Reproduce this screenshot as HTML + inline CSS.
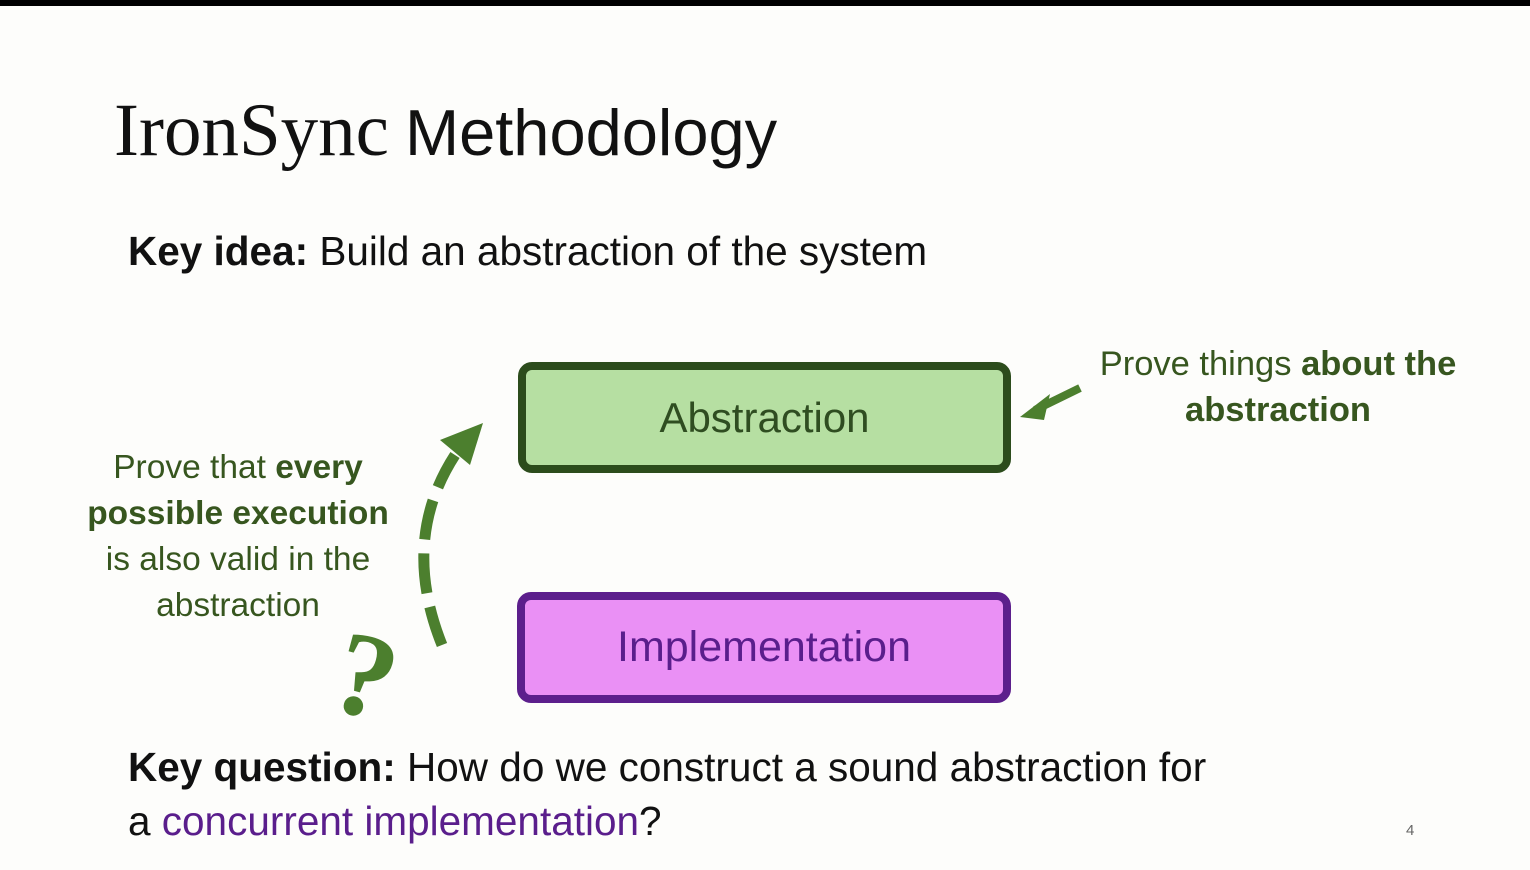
<!DOCTYPE html>
<html><head><style>
body{margin:0;width:1530px;height:870px;background:#fdfdfb;position:relative;overflow:hidden;font-family:"Liberation Sans",sans-serif}
.bar{position:absolute;left:0;top:0;width:1530px;height:6px;background:#000}
.t{position:absolute;white-space:nowrap}
.box{position:absolute;box-sizing:border-box;border-radius:14px;display:flex;align-items:center;justify-content:center;font-size:42px}
</style></head><body>
<div class="bar"></div>
<div class="t" style="left:114px;top:88px;color:#111"><span style="font-family:'Liberation Serif',serif;font-size:75px">IronSync</span><span style="font-size:65px;margin-left:16px">Methodology</span></div>
<div class="t" style="left:128px;top:228px;font-size:40.5px;color:#111"><b>Key idea:</b> Build an abstraction of the system</div>
<div class="box" style="left:518px;top:362px;width:493px;height:111px;border:8px solid #2c4c1c;background:#b6dfa2;color:#2f4d21">Abstraction</div>
<div class="box" style="left:517px;top:592px;width:494px;height:111px;border:8px solid #5c1f8c;background:#ea90f5;color:#5a1e8c;font-size:43px">Implementation</div>
<div class="t" style="left:1090px;top:341px;font-size:34.5px;color:#37561f;line-height:46px;text-align:center;width:376px">Prove things <b>about the<br>abstraction</b></div>
<div class="t" style="left:78px;top:445px;font-size:33.5px;color:#37561f;line-height:46px;text-align:center;width:320px">Prove that <b>every<br>possible execution</b><br>is also valid in the<br>abstraction</div>
<svg style="position:absolute;left:0;top:0" width="1530" height="870">
<path d="M442 645 Q400 540 455 455" fill="none" stroke="#4c7f2e" stroke-width="11" stroke-dasharray="40 14"/>
<polygon points="483,423 440,440 470,465" fill="#4c7f2e"/>
<path d="M1080 388 L1035 410" stroke="#4c7f2e" stroke-width="8"/>
<polygon points="1020,417 1050,394 1044,420" fill="#4c7f2e"/>
<text x="340" y="718" font-family="Liberation Serif,serif" font-weight="bold" font-size="120" fill="#4c7f2e" transform="rotate(15 375 660)">?</text>
</svg>
<div class="t" style="left:128px;top:740px;font-size:40.5px;color:#111;line-height:54px"><b>Key question:</b> How do we construct a sound abstraction for<br>a <span style="color:#5a1e8c">concurrent implementation</span>?</div>
<div class="t" style="left:1406px;top:822px;font-size:15px;color:#666">4</div>
</body></html>
